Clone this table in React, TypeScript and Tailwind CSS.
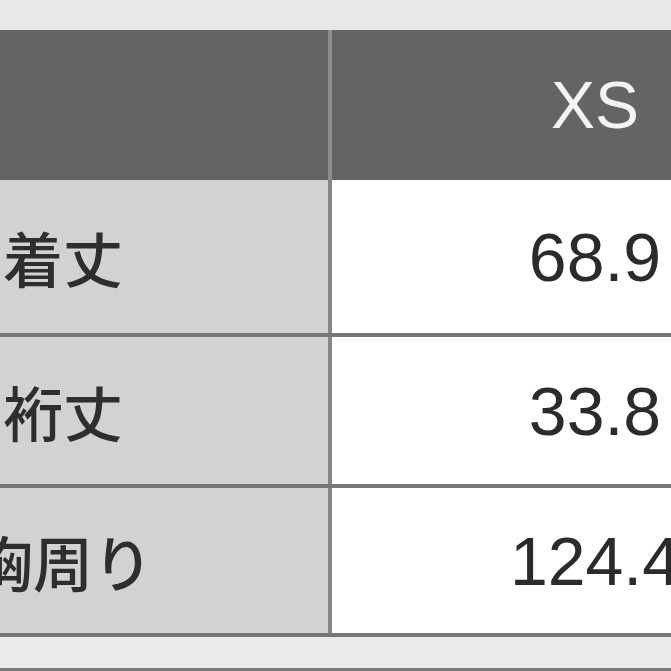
import React from "react";

const ROWS = [
  { label: "着丈", value: "68.9", h: "h-[157px]" },
  { label: "裄丈", value: "33.8", h: "h-[151px]" },
  { label: "胸周り", value: "124.4", h: "h-[149px]" },
];

export default function App() {
  return (
    <div className="w-[671px] h-[671px] overflow-hidden bg-[#eaeaea] flex flex-col">
      <div className="h-[30px] shrink-0 bg-[#e8e8e8]"></div>
      <div className="ml-[-202px] w-[1070px] shrink-0">
        {/* header */}
        <div className="flex h-[150px] bg-[#646464]">
          <div className="w-[530px] shrink-0"></div>
          <div className="w-[4px] shrink-0 bg-[#8e8e8e]"></div>
          <div className="w-[526px] shrink-0 flex items-center justify-center text-[66px] text-[#f3f3f3] font-['Liberation_Sans',Arial,sans-serif]">
            XS
          </div>
        </div>

        {ROWS.map((row) => (
          <div key={row.label} className={`flex ${row.h} border-b-4 border-[#777777]`}>
            <div className="w-[530px] shrink-0 bg-[#d2d2d2] flex items-center justify-center text-[60px] font-medium text-[#2e2e2e] font-['Noto_Sans_CJK_JP',sans-serif]">
              {row.label}
            </div>
            <div className="w-[4px] shrink-0 bg-[#858585]"></div>
            <div className="w-[526px] shrink-0 bg-white flex items-center justify-center text-[68px] text-[#2b2b2b] font-['Liberation_Sans',Arial,sans-serif]">
              {row.value}
            </div>
          </div>
        ))}
      </div>
      <div className="flex-1"></div>
      <div className="h-[3px] bg-[#7a7a7a] shrink-0"></div>
    </div>
  );
}
